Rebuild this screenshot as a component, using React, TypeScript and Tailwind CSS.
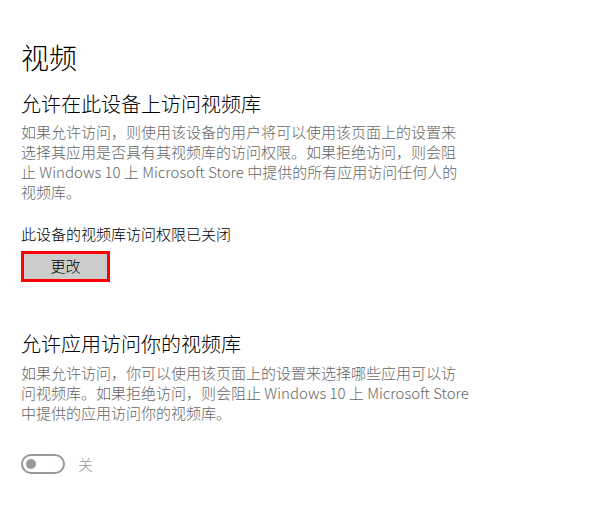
import React from "react";

const font = { fontFamily: '"Noto Sans CJK SC", "Noto Sans", sans-serif' };

function Para({ lines }: { lines: string[] }) {
  return (
    <div className="text-[15px] font-light leading-[20px] text-[#666666]">
      {lines.map((l, i) => (
        <div key={i} className="whitespace-nowrap">
          {l}
        </div>
      ))}
    </div>
  );
}

export default function App() {
  return (
    <div className="h-[511px] w-[600px] bg-white pl-[21px] pt-[37px]" style={font}>
      <h1 className="text-[28px] font-light leading-[40px] text-black">视频</h1>

      <h2 className="mt-[13px] text-[20px] font-light leading-[28px] text-black">允许在此设备上访问视频库</h2>
      <div className="mt-[4px]">
        <Para
          lines={[
            "如果允许访问，则使用该设备的用户将可以使用该页面上的设置来",
            "选择其应用是否具有其视频库的访问权限。如果拒绝访问，则会阻",
            "止 Windows 10 上 Microsoft Store 中提供的所有应用访问任何人的",
            "视频库。",
          ]}
        />
      </div>

      <p className="mt-[22px] text-[15px] font-light leading-[20px] text-black">此设备的视频库访问权限已关闭</p>
      <button
        type="button"
        className="mt-[7px] flex h-[31px] w-[89px] items-center justify-center border-[3px] border-[#ff0000] bg-[#cccccc] text-[15px] font-light text-black"
      >
        更改
      </button>

      <h2 className="mt-[48px] text-[20px] font-light leading-[28px] text-black">允许应用访问你的视频库</h2>
      <div className="mt-[5px]">
        <Para
          lines={[
            "如果允许访问，你可以使用该页面上的设置来选择哪些应用可以访",
            "问视频库。如果拒绝访问，则会阻止 Windows 10 上 Microsoft Store",
            "中提供的应用访问你的视频库。",
          ]}
        />
      </div>

      <div className="mt-[31px] flex items-center gap-[13px]">
        <div className="flex h-[20px] w-[44px] items-center rounded-full border-2 border-[#999999] px-[3px]">
          <div className="h-[10px] w-[10px] rounded-full bg-[#999999]" />
        </div>
        <span className="text-[15px] font-light leading-[20px] text-[#999999]">关</span>
      </div>
    </div>
  );
}
